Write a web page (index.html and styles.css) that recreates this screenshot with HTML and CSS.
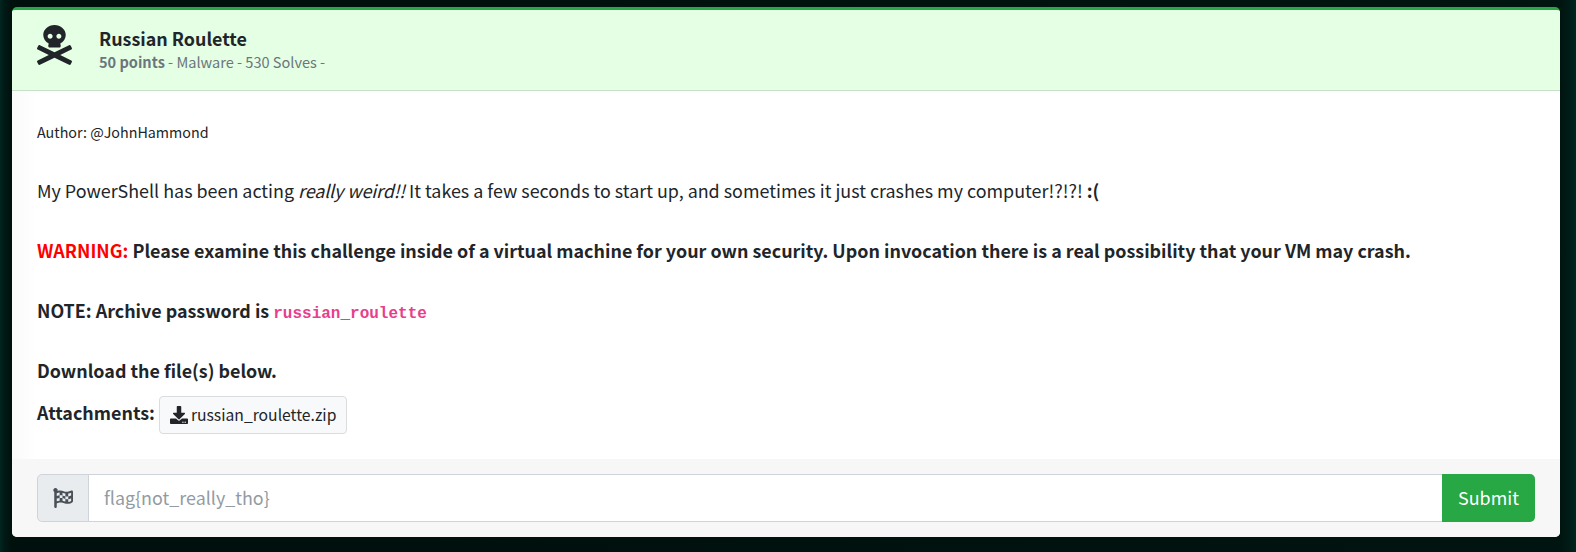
FILE: index.html
```
<!DOCTYPE html>
<html lang="en">
<head>
<meta charset="utf-8">
<title>Russian Roulette</title>
<link rel="stylesheet" href="styles.css">
</head>
<body>
<main class="card">
  <header class="card-header">
    <svg class="skull" viewBox="0 0 448 512"><path d="M439.15 453.06L297.17 384l141.99-69.06c7.9-3.95 11.11-13.56 7.15-21.46L432 264.85c-3.95-7.9-13.56-11.11-21.47-7.16L224 348.41 37.47 257.69c-7.9-3.95-17.51-.75-21.47 7.16L1.69 293.48c-3.95 7.9-.75 17.51 7.15 21.46L150.83 384 8.85 453.06c-7.9 3.95-11.11 13.56-7.15 21.47l14.31 28.63c3.95 7.9 13.56 11.11 21.47 7.15L224 419.59l186.53 90.72c7.9 3.95 17.51.75 21.47-7.15l14.31-28.63c3.95-7.91.74-17.52-7.16-21.47zM150 237.28l-5.48 25.87c-2.67 12.62 5.42 24.85 16.45 24.85h126.08c11.03 0 19.12-12.23 16.45-24.85l-5.5-25.87c41.78-22.41 70-62.75 70-109.28C368 57.31 303.53 0 224 0S80 57.31 80 128c0 46.53 28.22 86.87 70 109.28zM280 112c17.65 0 32 14.35 32 32s-14.35 32-32 32-32-14.35-32-32 14.35-32 32-32zm-112 0c17.65 0 32 14.35 32 32s-14.35 32-32 32-32-14.35-32-32 14.35-32 32-32z"/></svg>
    <div class="heading">
      <h1 class="title">Russian Roulette</h1>
      <div class="meta"><b>50 points</b> - Malware - 530 Solves -</div>
    </div>
  </header>
  <section class="card-body">
    <p class="author">Author: @JohnHammond</p>
    <p>My PowerShell has been acting <em>really weird!!</em> It takes a few seconds to start up, and sometimes it just crashes my computer!?!?! <b>:(</b></p>
    <p><b><span class="warning">WARNING:</span> Please examine this challenge inside of a virtual machine for your own security. Upon invocation there is a real possibility that your VM may crash.</b></p>
    <p><b>NOTE: Archive password is <code>russian_roulette</code></b></p>
    <p class="download"><b>Download the file(s) below.</b></p>
    <div class="attachments"><b class="label">Attachments:</b>
      <a class="file"><svg class="file-icon" viewBox="0 0 512 512"><path d="M216 0h80c13.3 0 24 10.7 24 24v168h87.7c17.8 0 26.7 21.5 14.1 34.1L269.7 378.3c-7.5 7.5-19.8 7.5-27.3 0L90.1 226.1c-12.6-12.6-3.7-34.1 14.1-34.1H192V24c0-13.3 10.7-24 24-24zm296 376v112c0 13.3-10.7 24-24 24H24c-13.3 0-24-10.7-24-24V376c0-13.3 10.7-24 24-24h146.7l49 49c20.1 20.1 52.5 20.1 72.6 0l49-49H488c13.3 0 24 10.7 24 24zm-124 88c0-11-9-20-20-20s-20 9-20 20 9 20 20 20 20-9 20-20zm64 0c0-11-9-20-20-20s-20 9-20 20 9 20 20 20 20-9 20-20z"/></svg><span>russian_roulette.zip</span></a>
    </div>
  </section>
  <footer class="card-footer">
    <span class="addon"><svg class="flag" viewBox="0 0 512 512"><path d="M243.2 189.9V258c26.1 5.9 49.3 15.6 73.6 22.3v-68.2c-26-5.8-49.4-15.5-73.6-22.2zm223.3-123c-34.3 15.9-76.5 31.9-117 31.9C296 98.8 251.7 64 184.3 64c-25 0-47.3 4.4-68 12 2.8-7.3 4.1-15.2 3.6-23.6C118.1 24 94.8 1.2 66.3 0 34.3-1.3 8 24.3 8 56c0 19 9.5 35.8 24 45.9V488c0 13.3 10.7 24 24 24h16c13.3 0 24-10.7 24-24v-94.4c28.3-12.1 63.6-22.1 114.4-22.1 53.6 0 97.8 34.8 165.2 34.8 48.2 0 86.7-16.3 122.5-40.9 8.7-6 13.8-15.8 13.8-26.4V95.9c.1-23.3-24.2-38.8-45.4-29zM169.6 325.5c-25.8 2.7-50 8.2-73.6 16.6v-70.5c26.2-9.3 47.5-15 73.6-17.4v71.3zM464 191c-23.6 9.8-46.3 19.5-73.6 23.9V286c24.8-3.4 51.4-11.8 73.6-26v70.5c-25.1 16.1-48.5 24.7-73.6 27.1V286c-27 3.7-47.9 1.5-73.6-5.6v67.4c-23.9-7.4-47.3-16.7-73.6-21.3V258c-19.7-4.4-40.8-6.8-73.6-3.8v-70c-22.4 3.1-44.6 10.2-73.6 20.9v-70.5c33.2-12.2 50.1-19.8 73.6-22v71.6c27-3.7 48.4-1.3 73.6 5.7v-67.4c23.7 7.4 47.2 16.7 73.6 21.3v68.4c23.7 5.3 47.6 6.9 73.6 2.7V143c27-4.8 52.3-13.6 73.6-22.5z"/></svg></span>
    <input class="answer" type="text" placeholder="flag{not_really_tho}">
    <button class="submit">Submit</button>
  </footer>
</main>
</body>
</html>
```
FILE: styles.css
```
* { box-sizing: border-box; }
body {
  margin: 0;
  height: 552px;
  padding: 7px 16px 15px 12px;
  overflow: hidden;
  background: linear-gradient(90deg, #00251f 0, #001a16 4px, #00100c 12px, #001410 1560px, #001a15 1568px, #00261f 1576px);
  font-family: "Source Sans Pro", "Noto Sans CJK SC", sans-serif;
  font-size: 17.9px;
  line-height: 30px;
  color: #212529;
}
.card {
  display: flex;
  flex-direction: column;
  height: 530px;
  border-top: 3px solid #28a745;
  border-radius: 5px;
  overflow: hidden;
  background: linear-gradient(90deg, #fafafa, #fff 24px);
}
.card-header {
  display: flex;
  height: 81px;
  padding: 15px 25px 0;
  background: #e4ffe3;
  border-bottom: 1px solid #c7e0c7;
}
.skull { width: 35px; height: 40px; fill: #212529; }
.heading { margin-left: 27px; padding-top: 1px; }
.title { margin: 0; font-size: 17.9px; line-height: 24px; font-weight: 700; }
.meta { font-size: 14.55px; line-height: 24px; color: #6c757d; }
.card-body { height: 368px; padding: 26px 25px 0; white-space: nowrap; }
p { margin: 0 0 30px; }
em { letter-spacing: -.1px; }
.author { font-size: 14.3px; margin-bottom: 28px; }
.warning { color: #f00; }
code { font: 700 16px/20px "Liberation Mono", monospace; color: #e83e8c; }
.download { margin-bottom: 11px; }
.attachments { display: flex; }
.label { padding-top: 1px; }
.file {
  display: flex;
  align-items: center;
  gap: 3px;
  width: 188px;
  height: 38px;
  margin-left: 4px;
  padding-left: 10px;
  border: 1px solid #dadcde;
  border-radius: 4px;
  background: #f8f9fa;
  font-size: 15.7px;
}
.file-icon { width: 18px; height: 18px; fill: #212529; }
.card-footer { display: flex; height: 78px; padding: 15px 25px; background: #f7f7f7; }
.addon {
  display: flex;
  align-items: center;
  justify-content: center;
  width: 52px;
  border: 1px solid #ced4da;
  border-radius: 5px 0 0 5px;
  background: #e9ecef;
}
.flag { width: 20px; height: 20px; fill: #495057; }
.answer {
  flex: 1;
  min-width: 0;
  margin-left: -1px;
  padding: 0 15px 2px;
  border: 1px solid #ced4da;
  border-right: 0;
  background: #fff;
  font: inherit;
}
.answer::placeholder { color: #939ba2; opacity: 1; }
.submit {
  width: 93px;
  padding: 0 0 2px;
  border: 0;
  border-radius: 0 5px 5px 0;
  background: #28a745;
  color: #fff;
  font: inherit;
}
```
